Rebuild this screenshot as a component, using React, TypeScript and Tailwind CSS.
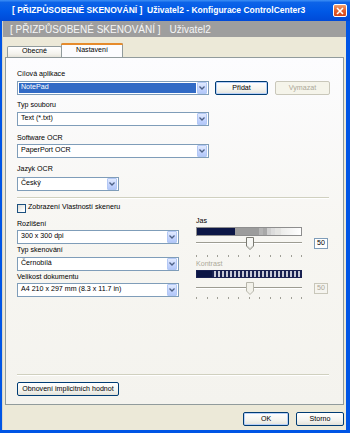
import React from "react";

type ComboProps = {
  value: string;
  width: string;
  selected?: boolean;
};

function DropArrow() {
  return (
    <div className="mr-px flex h-[12px] w-[10px] items-center justify-center rounded-[1px] border border-[#b3c8f5] bg-[linear-gradient(180deg,#e1eafe_0%,#c3d3fd_60%,#b3c8f9_100%)]">
      <svg width="6" height="4" viewBox="0 0 6 4">
        <path d="M0.5 0.5 L3 3 L5.5 0.5" fill="none" stroke="#4d6185" strokeWidth="1.3" />
      </svg>
    </div>
  );
}

function Combo({ value, width, selected }: ComboProps) {
  return (
    <div className={`flex h-[14px] items-center border border-[#7f9db9] bg-white ${width}`}>
      <div
        className={`mx-px flex h-[10px] flex-1 items-center px-[2px] leading-none ${
          selected ? "bg-[#316ac5] text-white" : "text-black"
        }`}
      >
        {value}
      </div>
      <DropArrow />
    </div>
  );
}

function XpButton({
  children,
  width,
  disabled,
  focused,
}: {
  children: React.ReactNode;
  width: string;
  disabled?: boolean;
  focused?: boolean;
}) {
  if (disabled) {
    return (
      <div
        className={`flex h-[14px] items-center justify-center rounded-[2px] border border-[#c9c7ba] bg-[#f5f4ea] text-[#aca899] ${width}`}
      >
        {children}
      </div>
    );
  }
  return (
    <div
      className={`flex h-[14px] items-center justify-center rounded-[2px] border border-[#003c74] bg-[linear-gradient(180deg,#ffffff_0%,#f4f4f0_60%,#e3e2da_100%)] text-black ${width} ${
        focused ? "shadow-[inset_0_0_0_1px_#b8d0f8]" : ""
      }`}
    >
      {children}
    </div>
  );
}

function Label({ children, muted }: { children: React.ReactNode; muted?: boolean }) {
  return (
    <div className={`h-[10px] leading-[10px] ${muted ? "text-[#aca899]" : "text-black"}`}>
      {children}
    </div>
  );
}

function Separator({ width }: { width: string }) {
  return <div className={`h-[2px] border-t border-b border-t-[#d0d0bf] border-b-white ${width}`} />;
}

function Thumb({ disabled }: { disabled?: boolean }) {
  return (
    <svg width="8" height="13" viewBox="0 0 8 13" className="absolute left-[50px] top-0">
      <path
        d="M0.5 0.5 H7.5 V9 L4 12.5 L0.5 9 Z"
        fill={disabled ? "#f2f1ea" : "#f7f7f4"}
        stroke={disabled ? "#b6b5aa" : "#7a7a72"}
        strokeWidth="1"
      />
      {!disabled && <path d="M1.5 9.2 L4 11.5 L6.5 9.2" fill="none" stroke="#c8c8c0" strokeWidth="1" />}
    </svg>
  );
}

function Slider({ disabled }: { disabled?: boolean }) {
  return (
    <div className="flex h-[13px] w-[132px] items-center">
      <div className="relative h-[13px] w-[106px]">
        <div className="absolute left-0 right-0 top-[5px] h-[2px] border-t border-b border-t-[#9d9c92] border-b-white" />
        <Thumb disabled={disabled} />
      </div>
      <div
        className={`ml-auto flex h-[11px] w-[14px] items-center justify-center border leading-none ${
          disabled
            ? "border-[#c9c7ba] bg-[#f5f4ef] text-[#aca899]"
            : "border-[#7f9db9] bg-white text-black"
        }`}
      >
        50
      </div>
    </div>
  );
}

function Ticks() {
  const ticks = Array.from({ length: 11 }, (_, i) => i);
  return (
    <div className="flex h-[2px] w-[106px] justify-between">
      {ticks.map((t) => (
        <div key={t} className="h-[2px] w-px bg-[#a09f96]" />
      ))}
    </div>
  );
}

export default function App() {
  return (
    <div className="flex h-[433px] w-[350px] flex-col overflow-hidden bg-[#0055e5] font-['Liberation_Sans',Arial,sans-serif] text-[7.1px]">
      {/* title bar */}
      <div className="flex h-[21px] items-center bg-[linear-gradient(180deg,#3d8ff5_0%,#0c63e8_12%,#0058e6_55%,#004ad8_100%)] pl-[12px] pr-[3px]">
        <div className="text-[8.5px] font-bold text-white whitespace-nowrap">
          [ PŘIZPŮSOBENÉ SKENOVÁNÍ ]&nbsp; Uživatel2 - Konfigurace ControlCenter3
        </div>
        <div className="ml-auto flex h-[13px] w-[14px] items-center justify-center rounded-[2px] border border-white bg-[linear-gradient(180deg,#f0a070_0%,#e3612f_50%,#d4461c_100%)]">
          <svg width="8" height="8" viewBox="0 0 8 8">
            <path d="M1 1 L7 7 M7 1 L1 7" stroke="white" strokeWidth="1.6" />
          </svg>
        </div>
      </div>

      <div className="mb-[3px] ml-[2px] mr-[4px] flex flex-1 flex-col border-l border-[#d8d6cc] bg-[#ece9d8]">
        {/* gray header */}
        <div className="flex h-[16px] items-center bg-[#9e9e9e] pl-[7px] text-[10px] text-[#f6f6f6] whitespace-nowrap">
          [ PŘIZPŮSOBENÉ SKENOVÁNÍ ]<span className="ml-[9px]">Uživatel2</span>
        </div>

        {/* tabs */}
        <div className="ml-[4px] mt-[6px] flex h-[14px] items-end">
          <div className="flex h-[11px] w-[55px] items-center justify-center rounded-t-[2px] border border-b-0 border-[#919b9c] bg-[linear-gradient(180deg,#ffffff_0%,#f3f2ec_70%,#e6e4da_100%)] leading-none">
            Obecné
          </div>
          <div className="-ml-px flex h-[14px] w-[62px] flex-col rounded-t-[2px] border border-b-0 border-[#919b9c] bg-[#fcfcfe]">
            <div className="-mx-px -mt-px h-[2px] rounded-t-[2px] bg-[#e68b2c]" />
            <div className="flex flex-1 items-center justify-center leading-none">Nastavení</div>
          </div>
        </div>

        {/* panel */}
        <div className="ml-[2px] mr-[2px] flex h-[348px] flex-col border border-[#919b9c] bg-[linear-gradient(180deg,#fcfcfe_0%,#f7f6f2_50%,#f4f3ee_100%)] pb-[8px] pl-[11px]">
          <div className="mt-[11px]">
            <Label>Cílová aplikace</Label>
          </div>
          <div className="mt-[2px] flex items-center">
            <Combo value="NotePad" width="w-[192px]" selected />
            <div className="ml-[6px]">
              <XpButton width="w-[53px]" focused>
                Přidat
              </XpButton>
            </div>
            <div className="ml-[7px]">
              <XpButton width="w-[55px]" disabled>
                Vymazat
              </XpButton>
            </div>
          </div>

          <div className="mt-[5px]">
            <Label>Typ souboru</Label>
          </div>
          <div className="mt-[2px]">
            <Combo value="Text (*.txt)" width="w-[192px]" />
          </div>

          <div className="mt-[7px]">
            <Label>Software OCR</Label>
          </div>
          <div className="mt-[1px]">
            <Combo value="PaperPort OCR" width="w-[192px]" />
          </div>

          <div className="mt-[6px]">
            <Label>Jazyk OCR</Label>
          </div>
          <div className="mt-[3px]">
            <Combo value="Český" width="w-[102px]" />
          </div>

          <div className="mt-[6px]">
            <Separator width="w-[312px]" />
          </div>

          <div className="mt-[4px] flex h-[10px] items-center">
            <div className="h-[9px] w-[9px] border border-[#1c5180] bg-[linear-gradient(135deg,#dcdcd6_0%,#ffffff_80%)]" />
            <div className="ml-[2px] leading-none">Zobrazení Vlastností skeneru</div>
          </div>

          <div className="flex">
            <div className="flex w-[162px] flex-col">
              <div className="mt-[6px]">
                <Label>Rozlišení</Label>
              </div>
              <div className="mt-[1px]">
                <Combo value="300 x 300 dpi" width="w-[162px]" />
              </div>
              <div className="mt-[1px]">
                <Label>Typ skenování</Label>
              </div>
              <div className="mt-[2px]">
                <Combo value="Černobílá" width="w-[162px]" />
              </div>
              <div className="mt-[1px]">
                <Label>Velikost dokumentu</Label>
              </div>
              <div className="mt-[1px]">
                <Combo value="A4 210 x 297 mm (8.3 x 11.7 in)" width="w-[162px]" />
              </div>
            </div>

            <div className="ml-[17px] flex w-[132px] flex-col">
              <div className="mt-[3px]">
                <Label>Jas</Label>
              </div>
              <div className="mt-[1px] flex h-[9px] w-[106px] border border-[#8e8e8e]">
                <div className="w-[38px] bg-[#0c1646]" />
                <div className="w-[24px] bg-[#9c9c9c]" />
                <div className="w-[4px] bg-[#b4b4b4]" />
                <div className="w-[4px] bg-[#a8a8a8]" />
                <div className="w-[4px] bg-[#cfcfcf]" />
                <div className="w-[4px] bg-[#dcdcdc]" />
                <div className="w-[6px] bg-[#e4e4e2]" />
                <div className="flex-1 bg-[linear-gradient(90deg,#ececea_0%,#ffffff_100%)]" />
              </div>
              <div className="mt-[1px]">
                <Slider />
              </div>
              <div className="mt-[5px]">
                <Ticks />
              </div>

              <div className="mt-[2px]">
                <Label muted>Kontrast</Label>
              </div>
              <div className="mt-[1px] flex h-[8px] w-[106px] border border-[#1a2252]">
                <div className="w-[15px] bg-[#0c1646]" />
                <div className="flex-1 bg-[repeating-linear-gradient(90deg,#1a2252_0px,#1a2252_2px,#c9cbd8_2px,#c9cbd8_4px)]" />
              </div>
              <div className="mt-[4px]">
                <Slider disabled />
              </div>
              <div className="mt-[2px]">
                <Ticks />
              </div>
            </div>
          </div>

          <div className="flex-1" />
          <Separator width="w-[312px]" />
          <div className="mt-[6px]">
            <XpButton width="w-[102px]">Obnovení implicitních hodnot</XpButton>
          </div>
        </div>

        {/* footer */}
        <div className="mr-[2px] mt-[7px] flex justify-end">
          <XpButton width="w-[46px]" focused>
            OK
          </XpButton>
          <div className="ml-[7px]">
            <XpButton width="w-[48px]">Storno</XpButton>
          </div>
        </div>
      </div>
    </div>
  );
}
